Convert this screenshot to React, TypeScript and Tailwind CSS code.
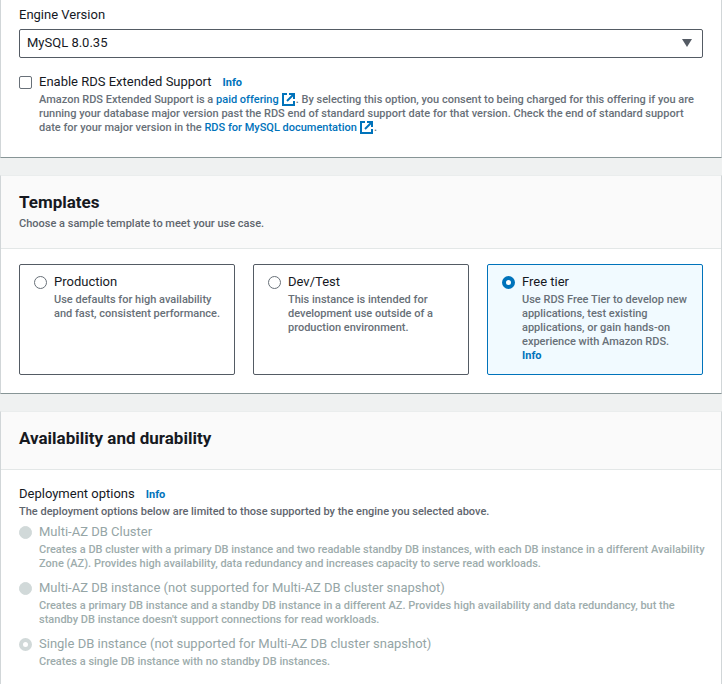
import type { ReactNode } from "react";

function ExternalIcon() {
  return (
    <svg viewBox="0 0 13 13" className="mr-px ml-[3px] inline-block size-[13px] align-[-3px]" fill="none" stroke="currentColor" strokeWidth="2" aria-hidden="true">
      <path d="M5 1H1v11h11V8" />
      <path d="M7 1h5v5" />
      <path d="M12 1 5 8" />
    </svg>
  );
}

function InfoLink({ className = "" }: { className?: string }) {
  return (
    <a href="#info" className={`text-[11px] leading-[14px] font-bold text-[#0073bb] ${className}`}>
      Info
    </a>
  );
}

function Card({ title, description, children }: { title: string; description?: string; children: ReactNode }) {
  return (
    <section className="border border-x-[#d1d6d8] border-t-[#eaeded] border-b-[#879596] bg-white">
      <header className={`border-b border-[#e3e7e7] bg-[#fafafa] px-[18px] pt-[15px] ${description ? "pb-[17px]" : "pb-5"}`}>
        <h2 className="text-[17px] leading-[22px] font-bold">{title}</h2>
        {description && <p className="mt-1 text-[11px] leading-[14px] font-medium text-[#5f666e]">{description}</p>}
      </header>
      {children}
    </section>
  );
}

const radio =
  "size-[13px] shrink-0 appearance-none rounded-full border border-[#687078] bg-white checked:border-4 checked:border-[#0073bb] disabled:border-[#d1d9d9] disabled:bg-[#d1d9d9] disabled:checked:border-4 disabled:checked:border-[#d1d9d9] disabled:checked:bg-white";

function Template({ id, title, selected, children }: { id: string; title: string; selected?: boolean; children: ReactNode }) {
  return (
    <div className="flex gap-[7px] rounded-[2px] border border-[#545b64] px-[14px] pt-2 pb-[11px] has-checked:border-[#0073bb] has-checked:bg-[#f1faff]">
      <input type="radio" id={id} name="template" defaultChecked={selected} className={`mt-[3px] ${radio}`} />
      <div>
        <label htmlFor={id} className="block text-[13px] leading-[18px]">
          {title}
        </label>
        <p className="mt-[2px] text-[11px] leading-[14px] font-medium text-[#687078]">{children}</p>
      </div>
    </div>
  );
}

function Deployment({ id, title, selected, children }: { id: string; title: string; selected?: boolean; children: ReactNode }) {
  return (
    <div className="flex gap-[7px]">
      <input type="radio" id={id} name="deployment" disabled defaultChecked={selected} className={`mt-[3px] ${radio}`} />
      <div>
        <label htmlFor={id} className="block text-[13px] leading-[18px] text-[#95a5a6]">
          {title}
        </label>
        <p className="mt-[2px] text-[11px] leading-[14px] font-medium text-[#9dacac]">{children}</p>
      </div>
    </div>
  );
}

export default function App() {
  return (
    <main className="flex min-h-screen flex-col gap-[17px] bg-[#eff1f1] font-['Roboto','Noto_Sans',sans-serif] text-[#16191f]">
      <section className="border-x border-b border-x-[#d1d6d8] border-b-[#879596] bg-white px-[18px] pt-[6px] pb-[22px]">
        <label htmlFor="engine" className="block text-[13px] leading-[18px]">
          Engine Version
        </label>
        <div className="relative mt-[5px]">
          <select id="engine" className="block h-[29px] w-full appearance-none rounded-[2px] border border-[#545b64] bg-white px-[7px] pb-[2px] text-[13px]">
            <option>MySQL 8.0.35</option>
          </select>
          <svg viewBox="0 0 10 8" className="pointer-events-none absolute top-[10px] right-[11px] h-2 w-[10px] fill-[#545b64]" aria-hidden="true">
            <path d="M0 0h10L5 8z" />
          </svg>
        </div>
        <div className="mt-[15px] flex gap-[7px]">
          <input type="checkbox" id="extended" className="mt-[3px] size-[13px] shrink-0 appearance-none rounded-[2px] border border-[#687078] bg-white checked:bg-[#0073bb]" />
          <div>
            <div className="flex items-baseline gap-[11px]">
              <label htmlFor="extended" className="text-[13px] leading-[18px]">
                Enable RDS Extended Support
              </label>
              <InfoLink />
            </div>
            <p className="mt-[2px] text-[11px] leading-[14px] font-medium text-[#687078]">
              Amazon RDS Extended Support is a{" "}
              <a href="#paid" className="text-[#0073bb]">
                paid offering
                <ExternalIcon />
              </a>
              . By selecting this option, you consent to being charged for this offering if you are running your database major version past
              the RDS end of standard support date for that version. Check the end of standard support date for your major version in the{" "}
              <a href="#docs" className="text-[#0073bb]">
                RDS for MySQL documentation
                <ExternalIcon />
              </a>
              .
            </p>
          </div>
        </div>
      </section>

      <Card title="Templates" description="Choose a sample template to meet your use case.">
        <div className="grid grid-cols-3 gap-[18px] px-[18px] pt-[15px] pb-[18px]">
          <Template id="production" title="Production">
            Use defaults for high availability and fast, consistent performance.
          </Template>
          <Template id="devtest" title="Dev/Test">
            This instance is intended for development use outside of a production environment.
          </Template>
          <Template id="free" title="Free tier" selected>
            Use RDS Free Tier to develop new applications, test existing applications, or gain hands-on experience with Amazon RDS.{" "}
            <InfoLink className="block" />
          </Template>
        </div>
      </Card>

      <Card title="Availability and durability">
        <div className="pt-[15px] pr-[15px] pb-6 pl-[18px]">
          <div className="flex items-baseline gap-[11px]">
            <h3 className="text-[13px] leading-[18px]">Deployment options</h3>
            <InfoLink />
          </div>
          <p className="mt-[2px] text-[11px] leading-[14px] font-medium text-[#5f666e]">
            The deployment options below are limited to those supported by the engine you selected above.
          </p>
          <div className="mt-1 flex flex-col gap-2">
            <Deployment id="cluster" title="Multi-AZ DB Cluster">
              Creates a DB cluster with a primary DB instance and two readable standby DB instances, with each DB instance in a different
              Availability Zone (AZ). Provides high availability, data redundancy and increases capacity to serve read workloads.
            </Deployment>
            <Deployment id="instance" title="Multi-AZ DB instance (not supported for Multi-AZ DB cluster snapshot)">
              Creates a primary DB instance and a standby DB instance in a different AZ. Provides high availability and data redundancy, but the
              standby DB instance doesn't support connections for read workloads.
            </Deployment>
            <Deployment id="single" title="Single DB instance (not supported for Multi-AZ DB cluster snapshot)" selected>
              Creates a single DB instance with no standby DB instances.
            </Deployment>
          </div>
        </div>
      </Card>
    </main>
  );
}
